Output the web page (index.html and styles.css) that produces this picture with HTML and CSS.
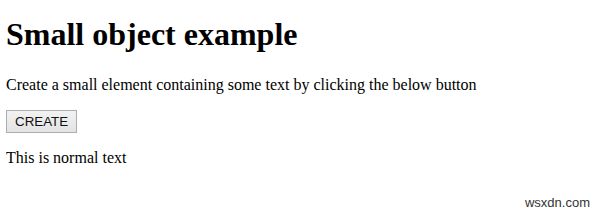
FILE: index.html
```html
<!DOCTYPE html>
<html lang="en">
<head>
    <meta charset="UTF-8">
    <title>Small object example</title>
    <link rel="stylesheet" href="styles.css">
</head>
<body>
    <h1>Small object example</h1>
    <p>Create a small element containing some text by clicking the below button</p>
    <button class="btn">CREATE</button>
    <p class="result">This is normal text</p>
    <div class="watermark">wsxdn.com</div>
</body>
</html>
```

FILE: styles.css
```css
body {
    margin: 0 6px;
    font-family: "Liberation Serif", "Times New Roman", serif;
    font-size: 16px;
    color: #000;
    background-color: #fff;
}
h1 {
    font-size: 32px;
    margin: 16px 0 23px;
}
.btn {
    font-family: "Liberation Sans", Arial, sans-serif;
    font-size: 13.33px;
    padding: 3px 8px;
    background: linear-gradient(#f2f2f2, #e3e3e3);
    border: 1px solid #adadad;
    border-radius: 0;
    color: #111;
}
.watermark {
    position: absolute;
    right: 10px;
    bottom: 6px;
    font-family: "Liberation Sans", Arial, sans-serif;
    font-size: 13px;
    color: #333;
}
```
